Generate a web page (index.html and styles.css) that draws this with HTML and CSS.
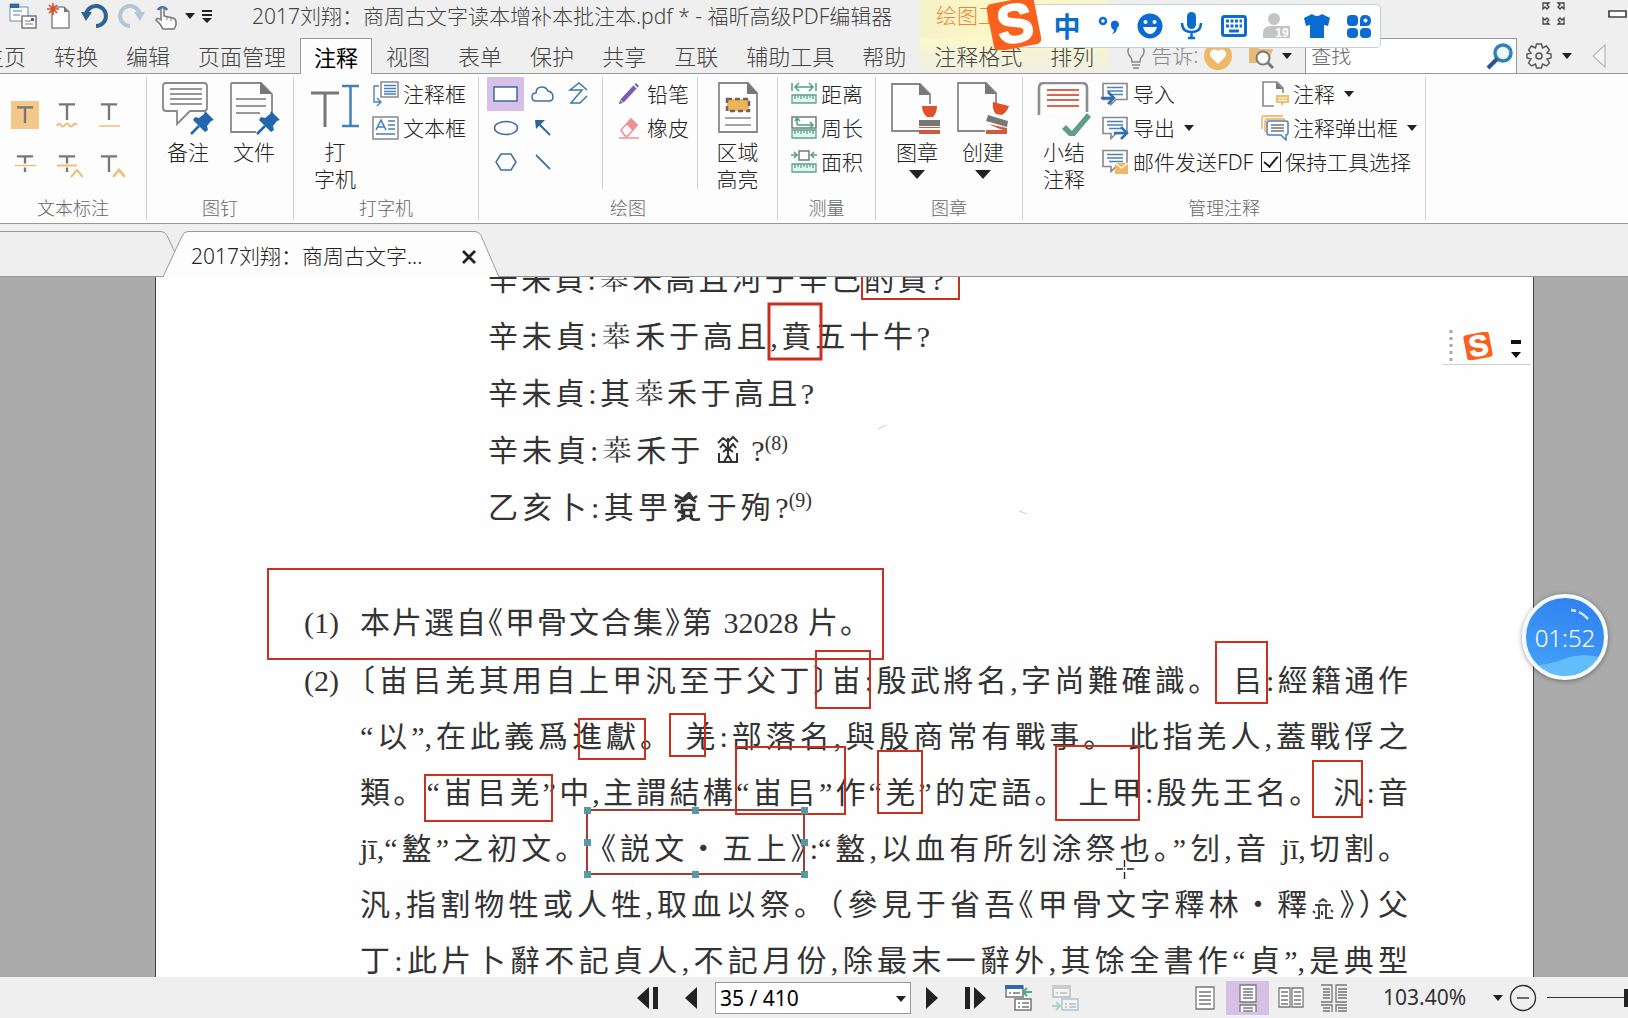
FILE: index.html
```html
<!DOCTYPE html>
<html lang="zh-CN">
<head>
<meta charset="utf-8">
<title>2017刘翔：商周古文字读本增补本批注本.pdf * - 福昕高级PDF编辑器</title>
<link rel="stylesheet" href="styles.css">
</head>
<body>
<svg class="defs" width="0" height="0" aria-hidden="true">
  <defs>
    <symbol id="t" viewBox="0 0 20 20"><path d="M1 1.500H19M10 1.500V19" fill="none" stroke="#777" stroke-width="2.600"/></symbol>
    <symbol id="pin" viewBox="0 0 25 25"><path d="M15 1l9 9-3 1-4 5 1 4-3 2-12-12 2-3 4 1 5-4z" fill="#2366ad"/><path d="M9 16l-8 8" stroke="#2366ad" stroke-width="2.500"/></symbol>
    <symbol id="bubble" viewBox="0 0 28 24"><path d="M2 1.500h24v16h-11l-5 5v-5h-8z" fill="#fff" stroke="#888" stroke-width="1.600"/><path d="M6 5.500h16M6 9h16M8 12.500h14" stroke="#4a82b8" stroke-width="1.700"/></symbol>
    <symbol id="ruler" viewBox="0 0 26 10"><path d="M1 1h24v8H1zM4 1v4M7 1v3M10 1v4M13 1v3M16 1v4M19 1v3M22 1v4" fill="#e6f3ef" stroke="#5aa58e" stroke-width="1.300"/></symbol>
    <symbol id="sogou" viewBox="0 0 56 52"><rect x="4" y="2" width="48" height="48" rx="5" transform="rotate(-11 28 26)" fill="#f9611c"/><text x="29" y="44" text-anchor="middle" transform="rotate(-9 28 26)" font-family="Liberation Sans, sans-serif" font-weight="700" font-size="54" fill="#fff" stroke="#fff" stroke-width="2">S</text></symbol>
  </defs>
</svg>

<div class="app">
  <header class="titlebar">
    <div class="quick">
      <button aria-label="窗口"><svg width="28" height="26"><path d="M1 1h9v3h9v14H1z" fill="#fff" stroke="#5b8fc0"/><path d="M1 1h9v4H1z" fill="#2e6aa8"/><path d="M4 8h9M4 12h7" stroke="#8aa9c8" stroke-width="1.500"/><path d="M13 13h14v12H13z" fill="#fff" stroke="#777" stroke-width="1.500"/><path d="M16 18h6M16 21h8" stroke="#777"/><path d="M22 15h3v3h-3z" fill="#2e6aa8"/></svg></button>
      <button aria-label="新建"><svg width="24" height="26"><path d="M5 4h12l5 5v16H5z" fill="#fff" stroke="#888" stroke-width="1.500"/><path d="M17 4v5h5z" fill="#777"/><path d="M6 0v12M0 6h12M2 2l8 8M10 2l-8 8" stroke="#d8502c" stroke-width="1.700"/></svg></button>
      <button aria-label="撤销"><svg width="28" height="26"><path d="M5 12a10 10 0 1 1 10 11" fill="none" stroke="#2f6193" stroke-width="4"/><path d="M0 9h11l-6 9z" fill="#2f6193"/></svg></button>
      <button aria-label="重做"><svg width="28" height="26"><path d="M23 12a10 10 0 1 0-10 11" fill="none" stroke="#b4c5d4" stroke-width="4"/><path d="M28 9H17l6 9z" fill="#b4c5d4"/></svg></button>
      <button class="hand" aria-label="手形工具"><svg width="24" height="28"><path d="M4 8a5 5 0 0 1 9 0" fill="none" stroke="#3476b5" stroke-width="2.500"/><path d="M7 7q2-3 3 0v7l9 2q3 1 3 4v3l-2 4H9l-3-5-4-4q1-3 5 0z" fill="#fff" stroke="#777" stroke-width="1.500"/><path d="M13 14v4M17 15v4" stroke="#777"/></svg></button>
      <button class="mini" aria-label="更多手形工具"><i class="caret"></i></button>
      <button class="mini wide" aria-label="自定义"><svg width="10" height="14"><path d="M0 2h10M0 6h10" stroke="#222" stroke-width="2"/><path d="M0 9h10l-5 5z" fill="#222"/></svg></button>
    </div>
    <h1 class="title">2017刘翔：商周古文字读本增补本批注本.pdf * - 福昕高级PDF编辑器</h1>
    <div class="context context-title">绘图工具</div>
    <div class="window-buttons">
      <button aria-label="全屏"><svg width="23" height="23" fill="none" stroke="#444" stroke-width="1.300"><path d="M1 1h6L5 3l2 2-2 2-2-2-2 2zM22 1h-6l2 2-2 2 2 2 2-2 2 2zM1 22h6l-2-2 2-2-2-2-2 2-2-2zM22 22h-6l2-2-2-2 2-2 2 2 2-2z"/></svg></button>
      <button aria-label="最小化"><svg width="20" height="8"><path d="M1 1h17v6H1z" fill="#fff" stroke="#444" stroke-width="1.700"/></svg></button>
    </div>
  </header>

  <div class="menubar">
    <nav class="menu" aria-label="功能区">
      <a href="#home">主页</a><a href="#convert">转换</a><a href="#edit">编辑</a><a href="#pages">页面管理</a><a href="#comment" class="active" aria-current="page">注释</a><a href="#view">视图</a><a href="#form">表单</a><a href="#protect">保护</a><a href="#share">共享</a><a href="#connect">互联</a><a href="#access">辅助工具</a><a href="#help">帮助</a>
      <div class="context context-tabs"><a href="#format">注释格式</a><a href="#arrange">排列</a></div>
    </nav>
    <div class="tell">
      <svg width="20" height="26" fill="none" stroke="#888" stroke-width="1.500"><path d="M6 19q0-4-3-7a8 8 0 1 1 14 0q-3 3-3 7zM6 22h8M7 25h6"/></svg>
      <span>告诉:</span>
      <button aria-label="收藏"><svg width="28" height="28"><circle cx="14" cy="14" r="14" fill="#eeb866"/><path d="M14 22l-7-7a4 4 0 0 1 7-6 4 4 0 0 1 7 6z" fill="#fff"/></svg></button>
      <button aria-label="查找文件"><svg width="27" height="26"><path d="M1 3h8l2 3h14l-5 14H1z" fill="#e9b978"/><circle cx="15" cy="15" r="6.500" fill="#fff" stroke="#777" stroke-width="2"/><path d="M20 20l5 5" stroke="#777" stroke-width="3"/></svg></button>
      <i class="caret"></i>
    </div>
    <div class="search">
      <input type="text" placeholder="查找" aria-label="查找">
      <button aria-label="搜索"><svg width="27" height="27"><circle cx="17" cy="10" r="8" fill="#eef7fd" stroke="#3182b8" stroke-width="3.500"/><path d="M11 16L2 25" stroke="#28578c" stroke-width="4"/></svg></button>
    </div>
    <div class="menu-end">
      <button aria-label="设置"><svg width="26" height="26" fill="none" stroke="#555"><circle cx="13" cy="13" r="3" stroke-width="1.500"/><path d="M10.500 1h5l1 4 4-2 3 4-2.500 3 4 1v4l-4 1 2.500 4-3 3-4-2-1 4h-5l-1-4-4 2-3-3 2.500-4-4-1v-4l4-1-2.500-3 3-4 4 2z" stroke-width="1.400"/></svg></button>
      <i class="caret"></i>
      <button class="back" aria-label="收起"><svg width="14" height="26"><path d="M13 2v22L1 13z" fill="#f6f6f6" stroke="#bbb" stroke-width="1.300"/></svg></button>
    </div>
  </div>

  <section class="ribbon" aria-label="注释">
    <div class="group g-text">
      <div class="tools marks">
        <button class="on" aria-label="高亮"><svg width="28" height="28"><use href="#t" x="5" y="4" width="18" height="20"/></svg></button>
        <button aria-label="波浪线"><svg width="28" height="28"><use href="#t" x="5" y="1" width="18" height="20"/><path d="M4 25q2-4 4-1t4 0 4 0 4 0 4 0" fill="none" stroke="#e9bd7c" stroke-width="2"/></svg></button>
        <button aria-label="下划线"><svg width="28" height="28"><use href="#t" x="5" y="1" width="18" height="20"/><path d="M4 25h21" stroke="#f0bc78" stroke-width="1.500"/></svg></button>
        <button aria-label="删除线"><svg width="28" height="28"><use href="#t" x="5" y="2" width="18" height="22"/><path d="M4 14.500h21" stroke="#fff" stroke-width="4"/><path d="M4 14.500h21" stroke="#f0bc78" stroke-width="1.500"/></svg></button>
        <button aria-label="替换"><svg width="30" height="28"><use href="#t" x="5" y="2" width="18" height="22"/><path d="M4 14.500h21" stroke="#fff" stroke-width="4"/><path d="M4 14.500h20M18 26l6-7 6 7" fill="none" stroke="#f0bc78" stroke-width="2"/></svg></button>
        <button aria-label="插入"><svg width="30" height="28"><use href="#t" x="5" y="2" width="18" height="22"/><path d="M18 26l6-7 6 7" fill="none" stroke="#f0bc78" stroke-width="2.500"/></svg></button>
      </div>
      <h2>文本标注</h2>
    </div>

    <div class="group g-pin">
      <div class="tools">
        <button class="big"><svg width="54" height="54"><path d="M5 1h38q3 0 3 3v22q0 3-3 3H29L16 42V29H5q-3 0-3-3V4q0-3 3-3z" fill="#fff" stroke="#888" stroke-width="1.800"/><path d="M9 7h32M9 12h32M9 17h32M9 22h32" stroke="#777" stroke-width="1.600"/><use href="#pin" x="29" y="28" width="25" height="25"/></svg>备注</button>
        <button class="big"><svg width="54" height="54"><path d="M4 1h30l11 11v19M29 50H4V1" fill="none" stroke="#888" stroke-width="1.800"/><path d="M33 0v12h12z" fill="#777"/><path d="M9 17h30M9 24h30M9 31h24" stroke="#777" stroke-width="1.600"/><use href="#pin" x="29" y="28" width="25" height="25"/></svg>文件</button>
      </div>
      <h2>图钉</h2>
    </div>

    <div class="group g-type">
      <div class="tools">
        <button class="big"><svg width="50" height="54"><path d="M1 11h28M15 11v34" stroke="#777" stroke-width="3"/><path d="M32 4h17M32 44h17M40.500 4v40" stroke="#447fba" stroke-width="2.500"/></svg>打<br>字机</button>
        <div class="stack">
          <button><svg width="27" height="26"><path d="M9 1h17v15H9z" fill="#fff" stroke="#888" stroke-width="1.500"/><path d="M12 4.500h12M12 7.500h12M12 10.500h12M12 13h12" stroke="#4a82b8" stroke-width="1.500"/><path d="M7 5H2v16h6M5 17l4 4-4 4" fill="none" stroke="#4a82b8" stroke-width="1.400"/></svg>注释框</button>
          <button><svg width="27" height="24"><path d="M1 1h25v22H1z" fill="#fff" stroke="#888" stroke-width="1.500"/><path d="M4 14l5-10 5 10M6 11h6M16 5h7M16 9h7M16 13h7M4 18h19" fill="none" stroke="#447fba" stroke-width="1.600"/></svg>文本框</button>
        </div>
      </div>
      <h2>打字机</h2>
    </div>

    <div class="group g-draw">
      <div class="tools">
        <div class="shapes">
          <button class="on" aria-label="矩形"><svg width="26" height="24"><path d="M1 5h23v14H1z" fill="#fff" stroke="#3e6aa0" stroke-width="1.500"/></svg></button>
          <button aria-label="云形"><svg width="26" height="24"><path d="M6 19q-4 0-4-4t4-4q0-6 6-6 4 0 6 4 5 1 5 6 0 4-4 4z" fill="none" stroke="#3e6f9f" stroke-width="1.500"/></svg></button>
          <button aria-label="折线"><svg width="26" height="24"><path d="M20 8l-8-7-9 7h12L4 21h9l7-7" fill="none" stroke="#3e77aa" stroke-width="1.500"/></svg></button>
          <button aria-label="椭圆"><svg width="26" height="24"><ellipse cx="13" cy="12" rx="11.500" ry="6.500" fill="none" stroke="#3e6f9f" stroke-width="1.500"/></svg></button>
          <button aria-label="箭头"><svg width="26" height="24"><path d="M6 5l14 14" stroke="#2f6496" stroke-width="1.800"/><path d="M5 4h10l-9 9z" fill="#2f6496"/></svg></button>
          <span></span>
          <button aria-label="多边形"><svg width="26" height="24"><path d="M8 4h10l5 8-5 8H8l-5-8z" fill="none" stroke="#3e6f9f" stroke-width="1.500"/></svg></button>
          <button aria-label="直线"><svg width="26" height="24"><path d="M6 5l14 14" stroke="#3e77aa" stroke-width="1.800"/></svg></button>
        </div>
        <div class="stack ink">
          <button><svg width="22" height="24"><path d="M4 19L17 5" stroke="#8059a8" stroke-width="4.500"/><path d="M18 4l1.500-1.500" stroke="#7a6690" stroke-width="4.500"/><path d="M1 22l1-4 3 3z" fill="#7a6690"/></svg>铅笔</button>
          <button><svg width="22" height="24"><path d="M3 14L13 3l6 6-9 11H7z" fill="#fff" stroke="#ef8e93" stroke-width="1.500"/><path d="M8 8l5-6 7 7-5 6z" fill="#ef8e93"/><path d="M1 22h20" stroke="#ef8e93" stroke-width="1.500"/></svg>橡皮</button>
        </div>
        <button class="big area"><svg width="42" height="54"><path d="M2 1h29l9 10v39H2z" fill="#fff" stroke="#888" stroke-width="1.800"/><path d="M30 0v12h11z" fill="#777"/><path d="M10 17h22v12H10z" fill="#f0b457" stroke="#666" stroke-width="2.500" stroke-dasharray="5 3"/><path d="M8 36h26M8 43h26" stroke="#888" stroke-width="1.600"/></svg>区域<br>高亮</button>
      </div>
      <h2>绘图</h2>
    </div>

    <div class="group g-measure">
      <div class="tools">
        <div class="stack">
          <button><svg width="26" height="24"><path d="M1 1v8M25 1v8M4 5h18M8 1L4 5l4 4M18 1l4 4-4 4" fill="none" stroke="#4fa088" stroke-width="1.500"/><use href="#ruler" y="12" width="26" height="10"/></svg>距离</button>
          <button><svg width="26" height="24"><path d="M1 1h24v11H1z" fill="none" stroke="#777" stroke-width="1.500"/><path d="M6 9V3M4 5l2-3 3 3M6 9h16M19 6l3 3-3 3" fill="none" stroke="#4fa088" stroke-width="1.500"/><use href="#ruler" y="13" width="26" height="10"/></svg>周长</button>
          <button><svg width="26" height="24"><path d="M8 1h10v9H8z" fill="none" stroke="#777" stroke-width="1.500"/><path d="M0 5h6M3 2l3 3-3 3M26 5h-6M23 2l-3 3 3 3" fill="none" stroke="#4fa088" stroke-width="1.500"/><use href="#ruler" y="13" width="26" height="10"/></svg>面积</button>
        </div>
      </div>
      <h2>测量</h2>
    </div>

    <div class="group g-stamp">
      <div class="tools">
        <button class="big"><svg width="54" height="54"><path d="M29 49H2V2h28l10 10v10" fill="none" stroke="#888" stroke-width="1.800"/><path d="M29 1v12h11z" fill="#777"/><path d="M32 24h15q0 7-4 11h-6q-5-4-5-11z" fill="#e0512a"/><path d="M29 38h21v6H29z" fill="#777"/><path d="M29 45h21v1H29zM29 48h21v4H29z" fill="#cf5a41"/></svg>图章<i class="caret large"></i></button>
        <button class="big"><svg width="54" height="54"><path d="M29 49H2V1h28l10 10v10" fill="none" stroke="#888" stroke-width="1.800"/><path d="M29 0v12h11z" fill="#777"/><path d="M37 20l16 4q-2 6-7 9l-6-1q-4-4-3-12z" fill="#e0512a"/><path d="M32 33l20 6-1 6-21-6z" fill="#777"/><path d="M32 42l19 4v3l-7-2zM30 48h21v4H30z" fill="#cf5a41"/></svg>创建<i class="caret large"></i></button>
      </div>
      <h2>图章</h2>
    </div>

    <div class="group g-manage">
      <div class="tools">
        <button class="big"><svg width="56" height="54"><path d="M3 33V6q0-5 5-5h38q5 0 5 5v24" fill="#fff" stroke="#8c8c92" stroke-width="2.600"/><path d="M11 8h32M11 13h32M11 18h32M11 24h32" stroke="#dc6550" stroke-width="1.800"/><path d="M28 45l8 8 17-20" fill="none" stroke="#5f9d8b" stroke-width="5.500"/></svg>小结<br>注释</button>
        <div class="stack manage-a">
          <button><svg width="28" height="24"><use href="#bubble" width="28" height="24"/><path d="M0 16h12M7 10l6 6-6 6" fill="none" stroke="#2e70b3" stroke-width="2.500"/></svg>导入</button>
          <button><svg width="28" height="24"><use href="#bubble" width="28" height="24"/><path d="M13 17h12M20 11l6 6-6 6" fill="none" stroke="#2e70b3" stroke-width="2.500"/></svg>导出<i class="caret"></i></button>
          <button><svg width="28" height="26"><use href="#bubble" width="28" height="24"/><path d="M14 14h13v11H14z" fill="#edb863"/><path d="M14 14l6.500 5 6.500-5" fill="none" stroke="#fff" stroke-width="1.300"/></svg>邮件发送FDF</button>
        </div>
        <div class="stack manage-b">
          <button><svg width="28" height="26"><path d="M13 25H2V1h14l6 6v5" fill="#fff" stroke="#888" stroke-width="1.600"/><path d="M15 1v7h7z" fill="#777"/><path d="M15 14h13v8h-5l-3 3v-3h-5z" fill="#edc06d"/><path d="M17 17h9M17 19.500h9" stroke="#fff"/></svg>注释<i class="caret"></i></button>
          <button><svg width="28" height="26"><path d="M1 14V3q0-2 2-2h19M4 17V7q0-3 3-3h17" fill="none" stroke="#edc07c" stroke-width="1.800"/><path d="M8 6h17q2 0 2 2v10q0 2-2 2v5l-5-5H8q-2 0-2-2V8q0-2 2-2z" fill="#fff" stroke="#4f7fb0" stroke-width="1.500"/><path d="M10 10h13M10 13h13M10 16h13" stroke="#777" stroke-width="1.500"/></svg>注释弹出框<i class="caret"></i></button>
          <label class="keep"><input type="checkbox" checked>保持工具选择</label>
        </div>
      </div>
      <h2>管理注释</h2>
    </div>
  </section>

  <div class="doctabs">
    <div class="tab-prev"><svg width="176" height="46"><path d="M0 .500H161q4 0 6 4l9 19" fill="none" stroke="#999"/></svg></div>
    <div class="tab-current">
      <svg class="tab-shape" width="336" height="46"><path d="M0 46L19 5q2-4.500 6-4.500H312q4 0 6 4L336 46" fill="#fdfdfd" stroke="#999"/></svg>
      <span>2017刘翔：商周古文字...</span>
      <button aria-label="关闭"><svg width="16" height="14"><path d="M2 1l12 12M14 1L2 13" stroke="#222" stroke-width="2.800"/></svg></button>
    </div>
  </div>

  <main class="viewport">
    <article class="page">
      <div class="verses">
        <p class="w1">辛未貞:𠦪禾高且河于辛巳酌賁?</p>
        <p class="w2">辛未貞:𠦪禾于高且,賁五十牛?</p>
        <p class="w3">辛未貞:其𠦪禾于高且?</p>
        <p class="w4">辛未貞:𠦪禾于 <svg class="glyph" width="24" height="30" role="img" aria-label="岳"><path d="M2 8l5-5 5 4 5-5 5 5M4 13l3-4 5 6 5-6 3 4M12 3v17M7 17l5-4 5 4M3 18v9h18v-9M8 27l4-7 4 7" fill="none" stroke="#333" stroke-width="2"/></svg> ?<sup>(8)</sup></p>
        <p class="w5">乙亥卜:其甼<svg class="glyph" width="30" height="30" role="img" aria-label="古字"><path d="M3 3l8 4 6-6 4 6 4-3M3 9h9l5-4 7 5M9 9l-6 7M10 13h12v5H10zM12 18v8l-7 3M6 19l7 3M19 18v8q3 3 9 1M9 24h12" fill="none" stroke="#333" stroke-width="2.600"/></svg>于殉?<sup>(9)</sup></p>
      </div>
      <div class="notes">
        <div class="num">(1)</div>
        <div class="n1"><p class="short">本片選自<span class="half">《</span>甲骨文合集<span class="half">》</span>第 32028 片。</p></div>
        <div class="num">(2)</div>
        <div>
          <p><span class="half">〔</span>峀㠯羌其用自上甲汎至于父丁<span class="half">〕</span>峀:殷武將名,字尚難確識。 㠯:經籍通作</p>
          <p>“以”,在此義爲進獻。 羌:部落名,與殷商常有戰事。 此指羌人,蓋戰俘之</p>
          <p>類。“峀㠯羌”中,主謂結構“峀㠯”作“羌”的定語。 上甲:殷先王名。 汎:音</p>
          <p>jī,“盭”之初文。 <span class="half">《</span>説文・五上<span class="half">》</span>:“盭,以血有所刉涂祭也。”刉,音 jī,切割。</p>
          <p>汎,指割物牲或人牲,取血以祭。<span class="half">（</span>參見于省吾<span class="half">《</span>甲骨文字釋林・釋<svg class="glyph" width="24" height="22" role="img" aria-label="古字"><path d="M8 5l4-3 4 3M4 8h16M8 9v12H4M15 9v12h7M2 14l2 2M20 13l2 2M11 14v4" fill="none" stroke="#444" stroke-width="2"/></svg><span class="half">》）</span>父</p>
          <p>丁:此片卜辭不記貞人,不記月份,除最末一辭外,其馀全書作“貞”,是典型</p>
        </div>
      </div>
      <svg class="annotations" width="1377" height="701" fill="none" stroke="#c8301f" aria-hidden="true">
        <g stroke="#ccc" stroke-width="1"><path d="M722 152l8-4M863 234l8 3"/></g>
        <rect x="706" y="-20" width="97" height="42" stroke-width="2"/>
        <rect x="613" y="27" width="52" height="55" stroke-width="3"/>
        <rect x="112" y="292" width="615" height="90" stroke-width="2"/>
        <rect x="660" y="374" width="54" height="57" stroke-width="2"/>
        <rect x="423" y="442" width="66" height="40" stroke-width="2"/>
        <rect x="514" y="437" width="35" height="42" stroke-width="2"/>
        <rect x="269" y="498" width="127" height="46" stroke-width="2"/>
        <rect x="580" y="470" width="109" height="67" stroke-width="2"/>
        <rect x="722" y="474" width="44" height="62" stroke-width="2"/>
        <rect x="1060" y="365" width="51" height="61" stroke-width="2"/>
        <rect x="900" y="469" width="83" height="74" stroke-width="2"/>
        <rect x="1157" y="484" width="49" height="56" stroke-width="2"/>
        <g class="selected">
          <rect x="431" y="533" width="217" height="64" stroke="#a83a34" stroke-width="2"/>
          <path d="M428 530h7v7h-7zM536 530h7v7h-7zM645 530h7v7h-7zM428 562h7v7h-7zM645 562h7v7h-7zM428 594h7v7h-7zM536 594h7v7h-7zM645 594h7v7h-7z" fill="#569aa3" stroke="none"/>
        </g>
        <path d="M960 592h7M971 592h7M968.500 583v7M968.500 595v7M968 592h1" stroke="#222" stroke-width="1.400"/>
      </svg>
      <div class="ime-mini">
        <svg width="90" height="38"><path d="M0 34.500h88" stroke="#ccc"/><path d="M8 0v34" stroke="#aaa" stroke-width="3" stroke-dasharray="3 4"/><use href="#sogou" x="20" y="2" width="30" height="28"/><path d="M68 10h10v4H68zM68 22h10l-5 6z" fill="#111"/></svg>
      </div>
    </article>
  </main>

  <footer class="status">
    <div class="pager">
      <button aria-label="第一页"><svg width="22" height="24"><path d="M12 1v22L0 12zM16 1h5v22h-5z" fill="#222"/></svg></button>
      <button aria-label="上一页"><svg width="12" height="24"><path d="M12 1v22L0 12z" fill="#222"/></svg></button>
      <div class="combo"><select aria-label="页码"><option>35 / 410</option></select><i class="caret"></i></div>
      <button aria-label="下一页"><svg width="12" height="24"><path d="M0 1v22l12-11z" fill="#222"/></svg></button>
      <button aria-label="最后一页"><svg width="22" height="24"><path d="M10 1v22l12-11zM1 1h5v22H1z" fill="#222"/></svg></button>
      <button aria-label="上一视图"><svg width="28" height="28"><path d="M1 2h17v11H1zM10 15h16v11H10z" fill="#fff" stroke="#777" stroke-width="1.500"/><path d="M0 1h18v4H0z" fill="#2f6aa8"/><path d="M4 9h2M8 9h7M13 19h2M17 19h7M13 23h2M17 23h7" stroke="#777" stroke-width="1.500"/><path d="M27 8h-9M22 4l-4 4 4 4" fill="none" stroke="#55a68a" stroke-width="2"/></svg></button>
      <button aria-label="下一视图"><svg width="28" height="28"><path d="M1 2h17v11H1z" fill="#f4f4f4" stroke="#bbb" stroke-width="1.500"/><path d="M10 15h16v11H10z" fill="#f4f4f4" stroke="#a8c3dc" stroke-width="1.500"/><path d="M0 1h18v4H0z" fill="#ccc"/><path d="M4 9h2M8 9h7M13 20h2M17 20h7M13 23h2M17 23h7" stroke="#bbb" stroke-width="1.500"/><path d="M0 22h8M4 18l4 4-4 4" fill="none" stroke="#a9d4c2" stroke-width="2"/></svg></button>
    </div>
    <div class="layouts">
      <button aria-label="单页"><svg width="28" height="28" fill="#fff" stroke="#777" stroke-width="1.300"><path d="M5 3h18v22H5zM8 8h12M8 12h12M8 16h12M8 20h12"/></svg></button>
      <button class="on" aria-label="连续"><svg width="28" height="28" fill="#fff" stroke="#777" stroke-width="1.300"><path d="M6 1h16v17H6zM9 5h10M9 8h10M9 11h10M9 14h10M6 28v-7h16v7M9 24h10M9 27h10"/></svg></button>
      <button aria-label="对开"><svg width="28" height="28" fill="#fff" stroke="#777" stroke-width="1.300"><path d="M2 4h11v19H2zM15 4h11v19H15zM4 8h7M4 12h7M4 16h7M4 20h7M17 8h7M17 12h7M17 16h7M17 20h7"/></svg></button>
      <button aria-label="连续对开"><svg width="28" height="28" fill="none" stroke="#777" stroke-width="1.300"><path d="M1 1h11v17H1M27 1H16v17h11M3 5h7M3 8h7M3 11h7M3 14h7M18 5h9M18 8h9M18 11h9M18 14h9M1 21h11v7M27 21H16v7M3 24h7M3 27h7M18 24h9M18 27h9"/></svg></button>
    </div>
    <div class="zoom">
      <output>103.40%</output>
      <i class="caret"></i>
      <button aria-label="缩小"><svg width="28" height="28" fill="none" stroke="#333" stroke-width="1.400"><circle cx="14" cy="14" r="12.500"/><path d="M8 14h12"/></svg></button>
      <div class="track"></div>
    </div>
  </footer>

  <div class="ime">
    <svg class="ime-logo" width="56" height="52" role="img" aria-label="搜狗"><use href="#sogou" width="56" height="52"/></svg>
    <button class="zh">中</button>
    <button aria-label="标点"><svg width="26" height="26"><circle cx="7" cy="8" r="3" fill="none" stroke="#0a6bd0" stroke-width="2.500"/><path d="M15 12a4 4 0 1 1 6 3q0 5-5 6 2-2 2-4-3-1-3-5z" fill="#0a6bd0"/></svg></button>
    <button aria-label="表情"><svg width="26" height="26"><circle cx="13" cy="13" r="12.500" fill="#0a6bd0"/><circle cx="8.500" cy="9" r="2" fill="#fff"/><circle cx="17.500" cy="9" r="2" fill="#fff"/><path d="M6 14h14q-2 7-7 7t-7-7z" fill="#fff"/></svg></button>
    <button aria-label="语音"><svg width="26" height="28"><rect x="8" y="0" width="9" height="17" rx="4.500" fill="#0a6bd0"/><path d="M3 11q0 9 9.500 9T22 11M12.500 20v6M9 26h7" fill="none" stroke="#0a6bd0" stroke-width="2.500"/></svg></button>
    <button aria-label="键盘"><svg width="26" height="22"><rect x="1.500" y="1.500" width="23" height="19" rx="2" fill="#fff" stroke="#0a6bd0" stroke-width="3"/><path d="M5 6h16M5 11h16" stroke="#0a6bd0" stroke-width="3" stroke-dasharray="3 1.500"/><path d="M8 16h10" stroke="#0a6bd0" stroke-width="3"/></svg></button>
    <button aria-label="用户"><svg width="28" height="26"><circle cx="12" cy="6" r="6" fill="#c4c4c4"/><path d="M1 25v-5q0-7 8-7h6q6 0 7 5v7z" fill="#c4c4c4"/><rect x="12" y="13" width="16" height="12" fill="#c4c4c4"/><text x="20" y="24" text-anchor="middle" font-family="Liberation Sans, sans-serif" font-size="12" font-weight="700" fill="#fff">19</text></svg></button>
    <button aria-label="皮肤"><svg width="26" height="26"><path d="M8 1q5 4 10 0l8 4-2 8-4-1v13H6V12l-4 1L0 5z" fill="#0a6bd0"/></svg></button>
    <button aria-label="工具箱"><svg width="26" height="26" fill="#0a6bd0"><rect x="1" y="2" width="11" height="11" rx="4"/><path d="M14 7q0-5 5-5 6 0 6 5.500T20 13h-6z"/><circle cx="19.500" cy="7.500" r="2" fill="#fff"/><rect x="1" y="15" width="11" height="10" rx="4"/><rect x="14" y="15" width="11" height="10" rx="4"/></svg></button>
  </div>

  <div class="timer">
    <svg width="78" height="78" aria-hidden="true"><path d="M0 68q20 0 38-7t40-1v18H0z" fill="#63bdfa"/><path d="M45 12l5 1M53 14q6 3 9 7" fill="none" stroke="#cfeaff" stroke-width="2.500"/></svg>
    <time>01:52</time>
  </div>
</div>
</body>
</html>
```
FILE: styles.css
```css
* { box-sizing: border-box; }

body {
  margin: 0;
  background: #efefef;
  color: #222;
  font: 300 21px/27px "Noto Sans", "Noto Sans CJK SC", sans-serif;
}

h1, h2, p { margin: 0; font-weight: inherit; }
button { border: 0; padding: 0; background: none; color: inherit; font: inherit; }
a { color: inherit; text-decoration: none; }
svg { display: block; flex: none; }
.defs { position: absolute; }

.app {
  position: relative;
  display: flex;
  flex-direction: column;
  height: 100vh;
  overflow: hidden;
  white-space: nowrap;
}

.caret {
  display: block;
  flex: none;
  width: 0;
  height: 0;
  border: 5px solid transparent;
  border-top: 6px solid #222;
  border-bottom: 0;
}
.caret.large { border-width: 9px 8px 0; margin: 4px auto 0; }

/* title bar */
.titlebar { display: flex; align-items: center; flex: none; height: 38px; }
.quick { display: flex; align-items: center; padding: 0 0 6px 5px; }
.quick button { display: flex; justify-content: center; width: 36px; }
.quick .hand { width: 34px; }
.quick .mini { width: 14px; }
.quick .wide { width: 20px; }
.title {
  flex: 0 0 703px;
  padding: 0 0 5px 35px;
  font-size: 21px;
  color: #444;
}
.context { background: linear-gradient(90deg, #f6f2c8, #fdf9c4 50%, #f7f4d4); }
.context-title { width: 190px; height: 38px; padding: 2px 16px; color: #e58a3c; }
.window-buttons { display: flex; align-items: center; gap: 43px; margin-left: auto; padding-bottom: 11px; }

/* menu row */
.menubar { display: flex; flex: none; height: 36px; border-bottom: 1px solid #999; }
.menu { display: flex; flex: none; margin: 0 0 -1px -32px; font-size: 22px; line-height: 37px; color: #444; }
.menu a { padding: 0 14px; }
.menu .active {
  border: 1px solid #999;
  border-bottom: 0;
  padding: 0 13px;
  background: #fdfdfd;
  color: #000;
  font-weight: 400;
}
.context-tabs { display: flex; margin-bottom: 1px; background: linear-gradient(#fbf8c8, #efefe6); }
.tell { display: flex; flex: none; align-items: center; width: 197px; padding-left: 18px; color: #888; }
.tell span { width: 58px; padding-left: 5px; }
.tell button { width: 40px; }
.tell .caret { margin-left: 8px; }
.tell button + button { width: 30px; padding-left: 4px; }
.search { display: flex; flex: 1; align-items: center; min-width: 0; border: 1px solid #999; border-bottom: 0; background: #fff; }
.search input { flex: 1; min-width: 0; border: 0; padding: 0 5px; background: none; font: inherit; font-size: 20px; }
.search input::placeholder { color: #666; }
.search button { margin-right: 3px; }
.menu-end { display: flex; flex: none; align-items: center; gap: 10px; width: 111px; padding-left: 9px; }
.menu-end .back { margin-left: 10px; }

/* ribbon */
.ribbon { display: flex; flex: none; height: 150px; padding: 3px 0; border-bottom: 1px solid #999; background: #fdfdfd; }
.group { display: flex; flex-direction: column; flex: none; border-right: 1px solid #d0d0d0; }
.group h2 { margin-top: auto; text-align: center; font-size: 18px; line-height: 24px; color: #666; }
.tools { display: flex; height: 112px; padding-left: 8px; }
.big { align-self: flex-start; width: 66px; padding-top: 5px; text-align: center; }
.big svg { margin: 0 auto 3px; }
.stack { display: flex; flex-direction: column; }
.stack button, .keep { display: flex; align-items: center; gap: 4px; height: 34px; }
.stack .caret { margin-left: 5px; }
.on { background: #d6c0e8; }

.g-text { width: 147px; }
.g-pin { width: 147px; }
.g-type { width: 185px; }
.g-draw { width: 299px; }
.g-measure { width: 98px; }
.g-stamp { width: 147px; }
.g-manage { width: 403px; }
.g-measure .tools { padding-left: 13px; }

.marks { display: grid; grid-template-columns: repeat(3, 42px); grid-template-rows: 50px 50px; padding: 13px 4px 0; }
.marks button { align-self: center; justify-self: center; width: 28px; }
.marks .on { background: #f4c78a; }
.g-type .stack { padding-left: 4px; }
.shapes { display: grid; grid-template-columns: repeat(3, 37px); grid-template-rows: repeat(3, 34px); }
.shapes button { display: flex; align-items: center; justify-content: center; }
.ink { margin: 0 0 0 4px; border: solid #d0d0d0; border-width: 0 1px; width: 97px; padding-left: 15px; }
.ink button { gap: 7px; }
.area { width: 80px; }
.manage-a { width: 164px; padding-left: 4px; }
.keep input {
  display: grid;
  place-items: center;
  appearance: none;
  width: 20px;
  height: 20px;
  margin: 0;
  border: 1px solid #222;
}
.keep input:checked::after {
  content: "";
  width: 6px;
  height: 12px;
  margin-top: -4px;
  border: solid #222;
  border-width: 0 2px 2px 0;
  transform: rotate(40deg);
}

/* document tabs */
.doctabs { display: flex; flex: none; height: 53px; padding-top: 7px; border-bottom: 1px solid #999; }
.tab-prev { width: 163px; }
.tab-current { position: relative; display: flex; align-items: center; width: 336px; padding: 6px 0 0 28px; }
.tab-shape { position: absolute; inset: 0; }
.tab-current span, .tab-current button { position: relative; }
.tab-current button { margin-left: auto; margin-right: 22px; }

/* document */
.viewport { flex: 1; min-height: 0; overflow: hidden; background: #ababab; }
.page {
  position: relative;
  display: flow-root;
  width: 1379px;
  min-height: 100%;
  margin-left: 155px;
  border: solid #444;
  border-width: 0 1px;
  background: #fefefe;
  color: #333;
  font: 400 30px/56px "Liberation Serif", "Noto Sans CJK JP", serif;
}
.page p { display: block; height: 56px; text-align: justify; text-align-last: justify; white-space: normal; }
.verses { display: grid; gap: 1px; padding-left: 332px; margin-top: -25px; }
.verses .w1 { width: 456px; }
.verses .w2 { width: 442px; }
.verses .w3 { width: 326px; }
.verses .w4 { width: 300px; }
.verses .w5 { width: 324px; }
.verses sup { font-size: 20px; line-height: 20px; }
.glyph { display: inline-block; vertical-align: -4px; }
.notes { display: grid; grid-template-columns: 56px 1048px; padding: 59px 0 0 148px; }
.notes .n1 { height: 58px; }
.notes .short { width: 510px; }
.half { font-feature-settings: "halt"; text-spacing-trim: space-all; }
.annotations { position: absolute; top: 0; left: 0; }
.ime-mini { position: absolute; top: 53px; right: 0; }

/* status bar */
.status { display: flex; align-items: center; justify-content: flex-end; flex: none; height: 41px; }
.pager { display: flex; align-items: center; }
.pager button { margin-right: 26px; }
.pager button:nth-child(2) { margin-right: 18px; }
.combo { position: relative; width: 196px; height: 32px; margin-right: 15px; }
.combo select {
  appearance: none;
  width: 100%;
  height: 100%;
  border: 1px solid #999;
  padding: 0 4px;
  background: #fff;
  color: #000;
  font: 400 21px/28px "Noto Sans", sans-serif;
}
.combo .caret { position: absolute; top: 14px; right: 5px; }
.pager button:nth-child(5), .pager button:nth-child(6) { margin-right: 19px; }
.layouts { display: flex; margin-left: 77px; }
.layouts button { display: flex; align-items: center; justify-content: center; width: 43px; height: 34px; }
.zoom { display: flex; align-items: center; margin-left: 28px; color: #333; }
.zoom output { width: 110px; font-weight: 400; font-size: 21px; }
.zoom button { margin: 0 10px 0 6px; }
.track { width: 81px; height: 18px; border-right: 4px solid #222; background: linear-gradient(#333, #333) center / 100% 1px no-repeat; }

/* floating input-method bar */
.ime {
  position: absolute;
  top: 4px;
  left: 1014px;
  display: flex;
  align-items: center;
  width: 367px;
  height: 44px;
  padding-left: 31px;
  border: 1px solid #c4d0da;
  border-radius: 4px;
  background: #fff;
}
.ime button { display: flex; justify-content: center; width: 42px; color: #0a6bd0; }
.ime .zh { font-size: 27px; font-weight: 700; }
.ime-logo { position: absolute; top: -7px; left: -29px; }

/* floating recording timer */
.timer {
  position: absolute;
  top: 594px;
  right: 20px;
  display: grid;
  place-items: center;
  width: 86px;
  height: 86px;
  border: 4px solid #f4fbff;
  border-radius: 50%;
  overflow: hidden;
  background: linear-gradient(20deg, #45a5f5, #2f7df2);
  box-shadow: 0 1px 5px #0006;
  color: #fff;
  font-size: 24px;
}
.timer svg, .timer time { grid-area: 1 / 1; }
.timer time { position: relative; }
```
